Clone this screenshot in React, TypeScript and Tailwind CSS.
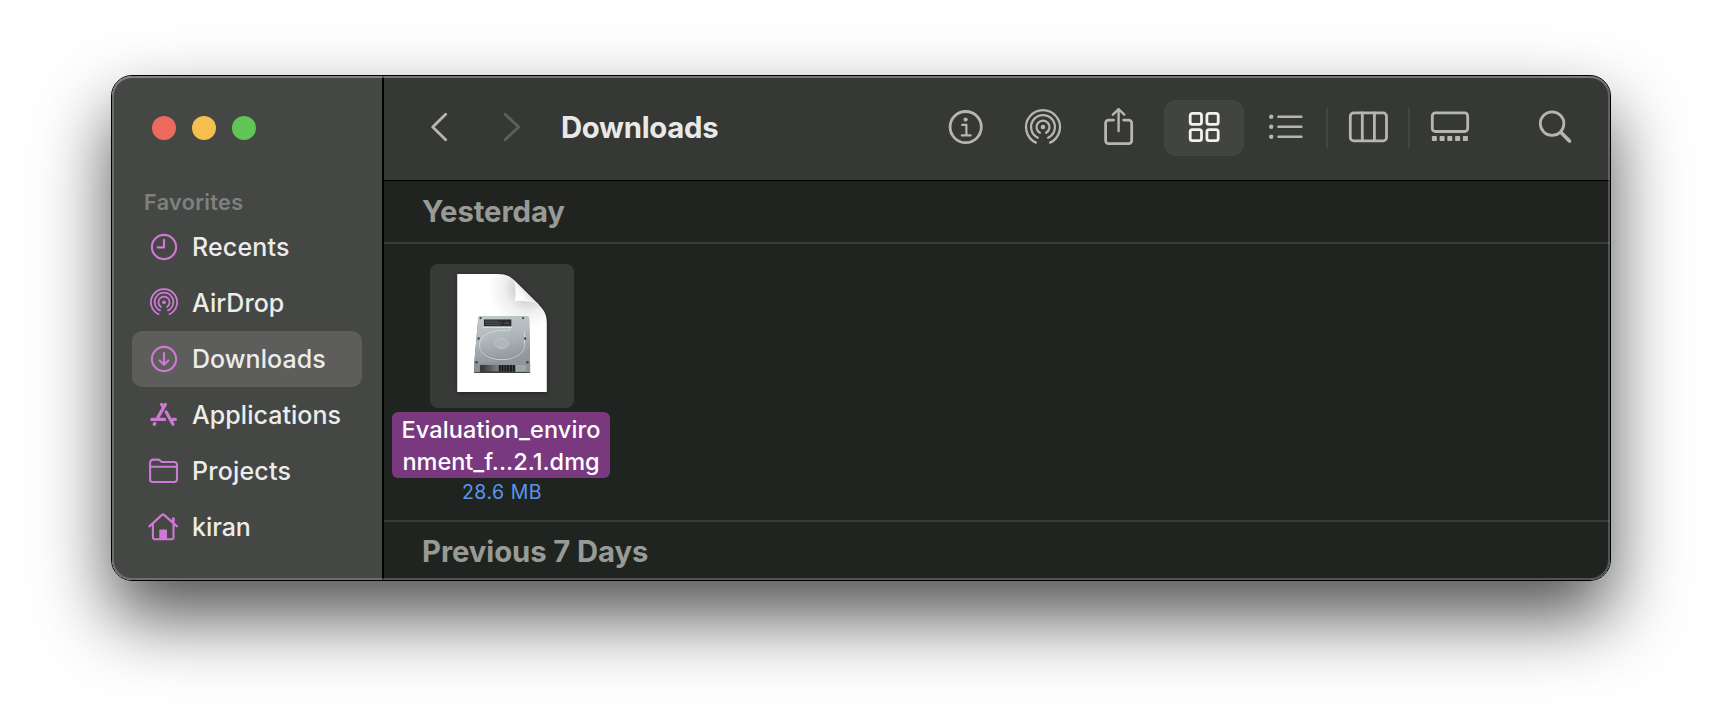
import type { ReactNode } from "react";

function ToolIcon({
  children,
  className = "",
  color = "text-[#b5b6b3]",
}: {
  children: ReactNode;
  className?: string;
  color?: string;
}) {
  return (
    <svg
      viewBox="0 0 48 48"
      className={`size-12 shrink-0 ${color} ${className}`}
      fill="none"
      stroke="currentColor"
      strokeWidth="2.8"
      strokeLinecap="round"
      strokeLinejoin="round"
    >
      {children}
    </svg>
  );
}

function SideIcon({ children }: { children: ReactNode }) {
  return (
    <svg
      viewBox="0 0 32 32"
      className="size-8 shrink-0 text-[#cf79d6]"
      fill="none"
      stroke="currentColor"
      strokeWidth="2.1"
      strokeLinecap="round"
      strokeLinejoin="round"
    >
      {children}
    </svg>
  );
}

const places: { name: string; icon: ReactNode; tracking: string; selected?: boolean }[] = [
  {
    name: "Recents",
    tracking: "tracking-[0.15px]",
    icon: (
      <>
        <circle cx="16" cy="16" r="12.1" />
        <path d="M16 8.8V16.4H9.6" />
      </>
    ),
  },
  {
    name: "AirDrop",
    tracking: "tracking-[0.05px]",
    icon: (
      <g strokeWidth="1.8">
        <path d="M10.6 27.2A13.1 13.1 0 1 1 21.4 27.2" />
        <path d="M12 23.4A9.3 9.3 0 1 1 20 23.4" />
        <path d="M13 19.9A5.6 5.6 0 1 1 19 19.9" />
        <circle cx="16" cy="15.3" r="1.9" fill="currentColor" stroke="none" />
      </g>
    ),
  },
  {
    name: "Downloads",
    tracking: "tracking-[0.05px]",
    selected: true,
    icon: (
      <>
        <circle cx="16" cy="16" r="12.1" />
        <path d="M16 10V21.6M11.6 17.4L16 21.8L20.4 17.4" />
      </>
    ),
  },
  {
    name: "Applications",
    tracking: "tracking-[0.05px]",
    icon: (
      <g strokeWidth="3.2">
        <path d="M17.4 5.4L9.9 18.4M13.6 5.4L15.4 8.2" />
        <path d="M3.8 20.4H16.6M25 20.4H27.4" />
        <path d="M6.8 24.4L6.2 25.4" />
        <path d="M18.2 13L25 25.2" />
      </g>
    ),
  },
  {
    name: "Projects",
    tracking: "tracking-[0.2px]",
    icon: (
      <>
        <path d="M2.1 24.2V7.6a3 3 0 0 1 3-3h4.6c1 0 1.6.3 2.3.9l.9.8c.7.5 1.2.7 2.2.7H26a3 3 0 0 1 3 3v14.2a2.8 2.8 0 0 1-2.8 2.8H4.9a2.8 2.8 0 0 1-2.8-2.8Z" />
        <path d="M2.4 11.8H28.7" />
      </>
    ),
  },
  {
    name: "kiran",
    tracking: "tracking-[-0.05px]",
    icon: (
      <>
        <path d="M1.4 15.4L14 3.9a1.5 1.5 0 0 1 2 0L29 15.4" />
        <path d="M4.9 13V26.2a2 2 0 0 0 2 2H23.5a2 2 0 0 0 2-2V13" />
        <path d="M25.3 6.4V11.4" strokeWidth="2.8" strokeLinecap="butt" />
        <path d="M11.3 28V19.6a1 1 0 0 1 1-1h5.7a1 1 0 0 1 1 1V28Z" fill="currentColor" stroke="none" />
      </>
    ),
  },
];

function DiskImageIcon() {
  return (
    <svg viewBox="0 0 268 353" className="h-[118px] w-[90px] overflow-visible drop-shadow-[0_1px_2px_rgba(0,0,0,0.4)]">
      <defs>
        <linearGradient id="fold" x1="172" y1="82" x2="208" y2="54" gradientUnits="userSpaceOnUse">
          <stop offset="0" stopColor="#ffffff" />
          <stop offset="0.6" stopColor="#fafafa" />
          <stop offset="1" stopColor="#e4e4e4" />
        </linearGradient>
        <radialGradient id="shade" cx="212" cy="42" r="120" gradientUnits="userSpaceOnUse">
          <stop offset="0.25" stopColor="#cecece" />
          <stop offset="0.6" stopColor="#efefef" />
          <stop offset="1" stopColor="#ffffff" />
        </radialGradient>
        <linearGradient id="plate" x1="0" y1="0" x2="0.25" y2="1">
          <stop offset="0" stopColor="#c3cbcf" />
          <stop offset="0.5" stopColor="#b0b8bc" />
          <stop offset="1" stopColor="#8f979b" />
        </linearGradient>
        <linearGradient id="front" x1="0" y1="0" x2="0" y2="1">
          <stop offset="0" stopColor="#7b7f81" />
          <stop offset="0.8" stopColor="#5c5f60" />
          <stop offset="1" stopColor="#3c3e3f" />
        </linearGradient>
        <linearGradient id="board" x1="0" y1="0" x2="1" y2="0">
          <stop offset="0" stopColor="#2f3133" />
          <stop offset="1" stopColor="#85898b" />
        </linearGradient>
      </defs>
      <path d="M0 0H122C148 0 160 8 178 26L236 84C258 106 268 118 268 146V353H0Z" fill="url(#shade)" />
      <path d="M168 17C176 38 175 60 173 82C198 79 224 83 245 93L178 26Z" fill="url(#fold)" />
      <path d="M68 127H210Q214 127 215 131L218 266V292Q218 296 214 296H55Q51 296 51 292V266L63 131Q64 127 68 127Z" fill="url(#front)" />
      <path d="M68 127H210Q214 127 215 131L218 266Q218 270 214 270H55Q51 270 51 266L63 131Q64 127 68 127Z" fill="url(#plate)" />
      <path d="M51 268H218V292Q218 296 214 296H206V272H68V296H55Q51 296 51 292Z" fill="#8e9496" />
      <rect x="70" y="272" width="58" height="19" fill="url(#board)" />
      <rect x="174" y="272" width="32" height="21" fill="#a0a5a7" />
      <path d="M127 272V291M135.500 272V291M144 272V291M152.500 272V291M161 272V291M169.500 272V291" stroke="#191a1b" strokeWidth="5.500" />
      <path d="M51 294.500H218" stroke="#3b3d3e" strokeWidth="2.500" />
      <path d="M76 160H164" stroke="#d8dfe3" strokeWidth="3" />
      <rect x="80" y="136" width="82" height="20" fill="#2b2d2e" />
      <path d="M84 141H122M84 146H134M84 151H130" stroke="#6b6f71" strokeWidth="1.6" />
      <path d="M142 150q6 -9 12 0" stroke="#898d8f" strokeWidth="2" fill="none" />
      <path
        d="M158 162V166C158 170 150 169 132 169C95 169 67 187 67 212C67 238 96 256 133 256C172 256 201 238 201 211V172"
        fill="none"
        stroke="#d0d8dc"
        strokeWidth="2.8"
      />
      <path d="M70 218C76 242 100 253 133 253C168 253 194 240 199 214" fill="none" stroke="#838c91" strokeWidth="1.6" />
      <ellipse cx="133" cy="208" rx="20" ry="15" fill="#afb7bb" stroke="#c6cdd1" strokeWidth="2" />
      <g fill="#38454e">
        <circle cx="70" cy="132" r="3.2" />
        <circle cx="197" cy="132" r="3.2" />
        <circle cx="64" cy="193" r="3.6" />
        <circle cx="203" cy="193" r="3.6" />
        <circle cx="58" cy="264" r="4" />
        <circle cx="210" cy="264" r="4" />
      </g>
    </svg>
  );
}

function Sidebar() {
  return (
    <aside className="flex w-[272px] shrink-0 flex-col border-r-2 border-black bg-[#454744]">
      <div className="flex gap-4 pt-10 pl-10">
        <span className="size-6 rounded-full bg-[#ed6a5f]" />
        <span className="size-6 rounded-full bg-[#f5bf4f]" />
        <span className="size-6 rounded-full bg-[#61c554]" />
      </div>
      <h2 className="mt-[46px] pl-8 text-[21.5px] leading-8 font-semibold tracking-[0.4px] text-[#7f817e]">Favorites</h2>
      <ul className="mt-[1px] px-5">
        {places.map((p) => (
          <li
            key={p.name}
            className={`flex h-14 items-center gap-3 rounded-[10px] pl-4 text-[25px] font-medium text-[#ececeb] ${p.selected ? "bg-[#5d5d5b]" : ""}`}
          >
            <SideIcon>{p.icon}</SideIcon>
            <span className={`pt-0.5 ${p.tracking}`}>{p.name}</span>
          </li>
        ))}
      </ul>
    </aside>
  );
}

function Toolbar() {
  return (
    <header className="flex h-[105px] shrink-0 items-center border-b border-black bg-[#363835] pr-[31px] pl-[31px]">
      <ToolIcon>
        <path d="M30.7 10.2L17.7 23L30.7 35.7" />
      </ToolIcon>
      <ToolIcon className="ml-[25px]" color="text-[#5e605d]">
        <path d="M17 10.2L30.7 23L17 35.7" />
      </ToolIcon>
      <h1 className="ml-[25px] text-[29.3px] font-bold tracking-[-0.3px] text-[#e9e9e8]">Downloads</h1>
      <div className="ml-auto flex items-center">
        <ToolIcon>
          <circle cx="23.7" cy="23.1" r="15.6" />
          <circle cx="23.6" cy="15.5" r="2.1" fill="currentColor" stroke="none" />
          <path d="M20.2 20.9H24.4V31.4M19.8 31.4H28.6" strokeWidth="2.2" />
        </ToolIcon>
        <ToolIcon className="ml-[29px]">
          <g strokeWidth="2.3">
            <path d="M16.9 38.6A17 17 0 1 1 31.1 38.6" />
            <path d="M18.9 33.7A11.9 11.9 0 1 1 29.1 33.7" />
            <path d="M20.9 28.8A6.5 6.5 0 1 1 27.1 28.8" />
            <circle cx="24" cy="23" r="2.3" fill="currentColor" stroke="none" />
          </g>
        </ToolIcon>
        <ToolIcon className="ml-[27px]">
          <path d="M19.6 16.1H14.6a3 3 0 0 0-3 3V36.6a3 3 0 0 0 3 3H34.7a3 3 0 0 0 3-3V19.1a3 3 0 0 0-3-3H29.6" />
          <path d="M24.6 5.6V27M18.9 10.7L24.6 5.1L30.3 10.7" strokeWidth="2.4" />
        </ToolIcon>
        <div className="ml-[22px] flex h-14 w-20 items-center justify-center rounded-xl bg-[#424441]">
          <ToolIcon color="text-[#f1f1f0]">
            <rect x="10.2" y="9.3" width="11.3" height="11.1" rx="2.2" />
            <rect x="26.9" y="9.3" width="11.3" height="11.1" rx="2.2" />
            <rect x="10.2" y="25.6" width="11.3" height="11.1" rx="2.2" />
            <rect x="26.9" y="25.6" width="11.3" height="11.1" rx="2.2" />
          </ToolIcon>
        </div>
        <ToolIcon className="ml-[18px]">
          <g fill="currentColor" stroke="none">
            <circle cx="9.2" cy="12.8" r="2.2" />
            <circle cx="9.2" cy="22.8" r="2.2" />
            <circle cx="9.2" cy="32.8" r="2.2" />
          </g>
          <path d="M16.4 12.8H39.4M16.4 22.8H39.4M16.4 32.8H39.4" strokeWidth="2.5" />
        </ToolIcon>
        <span className="ml-4 h-10 w-0.5 bg-[#454744]" />
        <ToolIcon className="ml-4">
          <rect x="6.3" y="8.9" width="36.2" height="27.9" rx="3.4" />
          <path d="M18.3 9V36.8M30.4 9V36.8" />
        </ToolIcon>
        <span className="ml-4 h-10 w-0.5 bg-[#454744]" />
        <ToolIcon className="ml-4">
          <rect x="6.3" y="8.9" width="35.4" height="18.6" rx="3" />
          <g fill="currentColor" stroke="none">
            <rect x="5.9" y="32" width="5" height="5" rx="0.8" />
            <rect x="13.6" y="32" width="5" height="5" rx="0.8" />
            <rect x="21.3" y="32" width="5" height="5" rx="0.8" />
            <rect x="29.1" y="32" width="5" height="5" rx="0.8" />
            <rect x="36.9" y="32" width="5" height="5" rx="0.8" />
          </g>
        </ToolIcon>
        <ToolIcon className="ml-[57px]">
          <circle cx="21.1" cy="19.6" r="11.8" />
          <path d="M29.8 28.2L38.5 37" strokeWidth="3.7" />
        </ToolIcon>
      </div>
    </header>
  );
}

export default function App() {
  return (
    <div
      className="h-[728px] w-[1722px] overflow-hidden bg-white pt-[75px] pl-[111px] antialiased"
      style={{ fontFamily: 'Inter, "Liberation Sans", sans-serif' }}
    >
      <div className="relative flex h-[506px] w-[1500px] overflow-hidden rounded-[21px] border border-black shadow-[0_36px_72px_rgba(0,0,0,0.68)]">
        <Sidebar />
        <main className="flex min-w-0 flex-1 flex-col bg-[#202421]">
          <Toolbar />
          <h2 className="flex h-[63px] shrink-0 items-center border-b-2 border-[#3a3d3a] bg-[#212320] pl-[38px] text-[29.3px] font-bold tracking-[-0.1px] text-[#989a96]">
            Yesterday
          </h2>
          <section className="flex h-[278px] shrink-0 items-start border-b-2 border-[#363937] pt-5 pl-2">
            <figure className="flex w-[218px] flex-col items-center">
              <div className="ml-0.5 flex size-36 items-center justify-center rounded-lg bg-[#383a37] pb-[6px]">
                <DiskImageIcon />
              </div>
              <figcaption className="mt-1 flex h-[66px] w-full flex-col items-center rounded-md bg-[#7a387f] pt-0.5 text-[23.5px] leading-8 font-medium whitespace-nowrap text-white">
                <span className="tracking-[0.1px]">Evaluation_enviro</span>
                <span>nment_f...2.1.dmg</span>
              </figcaption>
              <span className="ml-0.5 text-[19.5px] leading-7 tracking-[0.5px] text-[#5a96ee]">28.6 MB</span>
            </figure>
          </section>
          <h2 className="pt-3 pl-[38px] text-[29.3px] leading-9 font-bold tracking-[-0.1px] whitespace-nowrap text-[#989a96]">
            Previous 7 Days
          </h2>
        </main>
        <div className="pointer-events-none absolute inset-0 rounded-[20px] shadow-[inset_0_0_0_2px_rgba(255,255,255,0.22),inset_0_2px_0_0_rgba(255,255,255,0.14)]" />
      </div>
    </div>
  );
}
